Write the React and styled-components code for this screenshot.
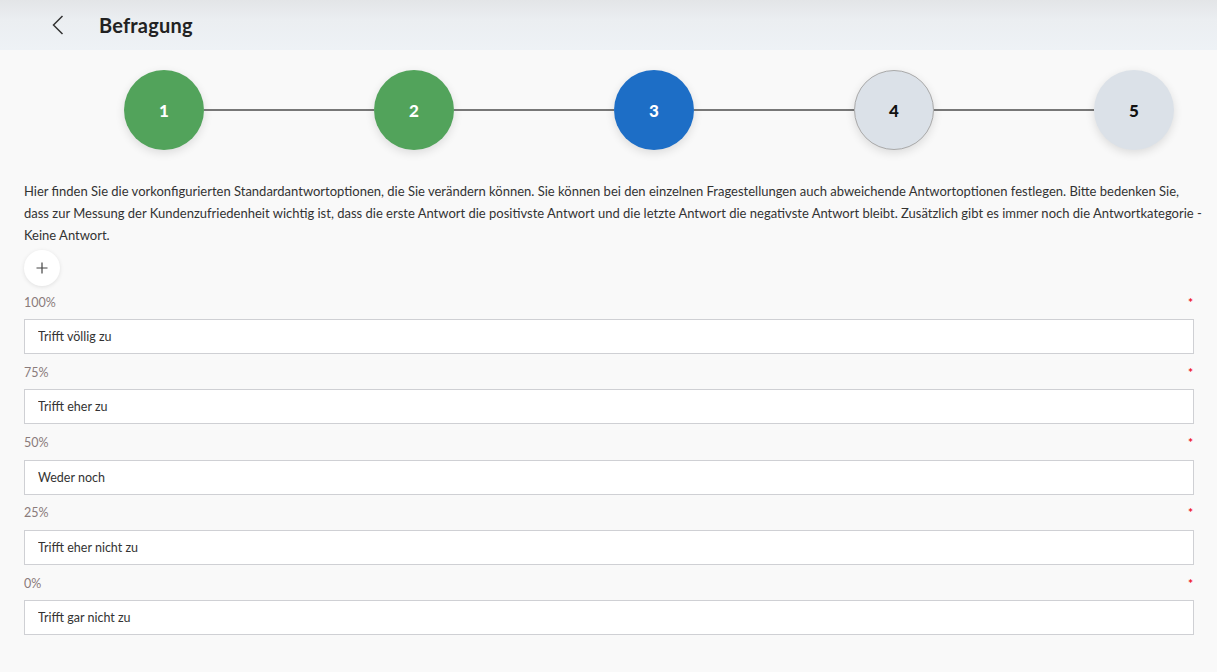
import React from "react";
import styled, { createGlobalStyle } from "styled-components";

const GlobalStyle = createGlobalStyle`
    body {
        margin: 0;
        background: #f9f9f9;
        font-family: Lato, "Open Sans", sans-serif;
        color: #333;
    }
`;

const Page = styled.div`
    min-height: 672px;
    background: #f9f9f9;
`;

const TopBar = styled.div`
    height: 50px;
    display: flex;
    align-items: center;
    padding-left: 52px;
    background: linear-gradient(to bottom, #e3e5e7 0%, #ebeef1 40%, #eef2f6 100%);

    h1 {
        margin: 0 0 0 33px;
        font-size: 20px;
        font-weight: 700;
        letter-spacing: 0.2px;
        color: #222;
    }
`;

const BackButton = styled.button`
    border: none;
    background: none;
    padding: 0;
    width: 14px;
    height: 24px;
    display: flex;
    align-items: center;
    cursor: pointer;
`;

const Stepper = styled.div`
    display: flex;
    align-items: center;
    padding: 20px 0 0 124px;
    height: 80px;
`;

const Step = styled.div`
    width: 80px;
    height: 80px;
    border-radius: 50%;
    flex-shrink: 0;
    box-sizing: border-box;
    display: flex;
    align-items: center;
    justify-content: center;
    font-size: 17px;
    font-weight: 900;
    background: ${(p) => (p.$state === "done" ? "#52a35b" : p.$state === "active" ? "#1d6ec6" : "#dbe1e8")};
    color: ${(p) => (p.$state === "todo" ? "#111" : "#fff")};
    border: ${(p) => (p.$bordered ? "1px solid #a9a9a9" : "none")};
    box-shadow: 0 3px 10px rgba(0, 0, 0, 0.12);
`;

const Connector = styled.div`
    width: ${(p) => p.$width}px;
    height: 2px;
    background: #777;
    flex-shrink: 0;
`;

const Content = styled.div`
    padding: 30px 23px 0 24px;
`;

const Intro = styled.p`
    margin: 0 -10px 0 0;
    font-size: 13px;
    line-height: 22px;
    color: #333;
`;

const AddButton = styled.button`
    margin-top: 4px;
    width: 36px;
    height: 36px;
    border-radius: 50%;
    border: none;
    background: #fff;
    box-shadow: 0 1px 4px rgba(0, 0, 0, 0.1);
    display: flex;
    align-items: center;
    justify-content: center;
    cursor: pointer;
`;

const Field = styled.div`
    margin-top: ${(p) => (p.$first ? "8px" : "10.3px")};
`;

const LabelRow = styled.div`
    display: flex;
    justify-content: space-between;
    align-items: center;
    height: 16px;
    margin-bottom: 9px;
    font-size: 12.5px;
    color: #8a7b7b;
`;

const Required = styled.span`
    color: #f0121f;
    font-size: 12px;
    font-weight: 700;
    margin-right: 1px;
`;

const Input = styled.input`
    display: block;
    width: 100%;
    height: 35px;
    box-sizing: border-box;
    border: 1px solid #cfd0d4;
    background: #fff;
    padding: 0 13px;
    font-family: Lato, "Open Sans", sans-serif;
    font-size: 12.5px;
    color: #333;
    outline: none;
`;

const steps = [
    { n: 1, state: "done" },
    { n: 2, state: "done" },
    { n: 3, state: "active" },
    { n: 4, state: "todo", bordered: true },
    { n: 5, state: "todo" },
];
const gaps = [170, 160, 160, 160];

const answers = [
    { label: "100%", value: "Trifft völlig zu" },
    { label: "75%", value: "Trifft eher zu" },
    { label: "50%", value: "Weder noch" },
    { label: "25%", value: "Trifft eher nicht zu" },
    { label: "0%", value: "Trifft gar nicht zu" },
];

const App = () => {
    return (
        <Page>
            <GlobalStyle />
            <TopBar>
                <BackButton aria-label="Zurück">
                    <svg width="12" height="20" viewBox="0 0 12 20">
                        <path d="M10.5 1 L1.5 10 L10.5 19" fill="none" stroke="#333" strokeWidth="1.5" />
                    </svg>
                </BackButton>
                <h1>Befragung</h1>
            </TopBar>

            <Stepper>
                {steps.map((s, i) => (
                    <React.Fragment key={s.n}>
                        <Step $state={s.state} $bordered={s.bordered}>{s.n}</Step>
                        {i < gaps.length && <Connector $width={gaps[i]} />}
                    </React.Fragment>
                ))}
            </Stepper>

            <Content>
                <Intro>
                    Hier finden Sie die vorkonfigurierten Standardantwortoptionen, die Sie verändern können. Sie können bei den einzelnen Fragestellungen auch abweichende Antwortoptionen festlegen. Bitte bedenken Sie, dass zur Messung der Kundenzufriedenheit wichtig ist, dass die erste Antwort die positivste Antwort und die letzte Antwort die negativste Antwort bleibt. Zusätzlich gibt es immer noch die Antwortkategorie - Keine Antwort.
                </Intro>
                <AddButton aria-label="Hinzufügen">
                    <svg width="12" height="12" viewBox="0 0 12 12">
                        <path d="M6 0.5 V11.5 M0.5 6 H11.5" stroke="#444" strokeWidth="1.2" />
                    </svg>
                </AddButton>
                {answers.map((a, i) => (
                    <Field key={a.label} $first={i === 0}>
                        <LabelRow>
                            <span>{a.label}</span>
                            <Required>*</Required>
                        </LabelRow>
                        <Input defaultValue={a.value} />
                    </Field>
                ))}
            </Content>
        </Page>
    );
};

export default App;
